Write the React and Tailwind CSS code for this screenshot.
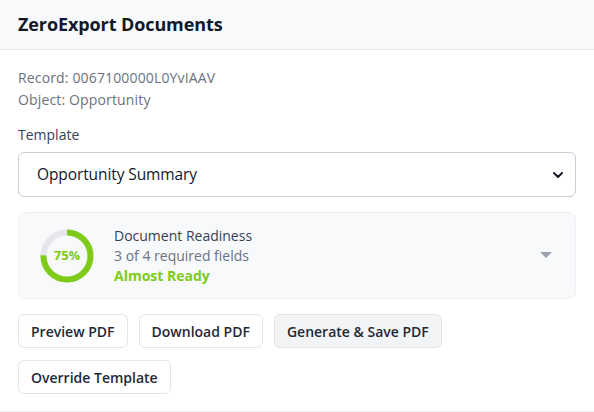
import { ChevronDown } from 'lucide-react'

/* ── readiness ring ── */
function Ring({ pct }) {
  const r = 23.5
  const c = 2 * Math.PI * r
  return (
    <div className="relative w-[54px] h-[54px] shrink-0">
      <svg width="54" height="54" viewBox="0 0 54 54">
        <circle cx="27" cy="27" r={r} fill="none" stroke="#e5e7eb" strokeWidth="6" />
        <circle cx="27" cy="27" r={r} fill="none" stroke="#7ecb1a" strokeWidth="6"
          strokeDasharray={`${c * pct / 100} ${c}`} transform="rotate(-90 27 27)" />
      </svg>
      <div className="absolute inset-0 flex items-center justify-center text-[13px] font-bold text-[#7ecb1a]">
        {pct}%
      </div>
    </div>
  )
}

function Btn({ children, active }) {
  return (
    <button className={`h-[34px] px-[12px] rounded-md border border-[#e3e5e8] text-[14px] font-semibold text-[#1f2937] ${active ? 'bg-[#f3f4f6]' : 'bg-white'}`}>
      {children}
    </button>
  )
}

export default function App() {
  return (
    <div className="w-[594px] h-[412px] bg-white font-['Open_Sans','Noto_Sans',sans-serif] border-b border-[#eceef1] overflow-hidden">
      <div className="h-[50px] bg-[#f8f9fb] border-b border-[#e2e5e9] px-[18px] flex items-center">
        <h1 className="text-[18px] font-bold text-[#111827] tracking-[-0.1px]">ZeroExport Documents</h1>
      </div>

      <div className="px-[18px] pt-[17px]">
        <div className="text-[14px] leading-[22px] text-[#6b7280] tracking-[0.15px]">
          <div>Record: 0067100000L0YvIAAV</div>
          <div>Object: Opportunity</div>
        </div>

        <div className="mt-[13px] text-[14px] font-medium text-[#374151]">Template</div>
        <div className="mt-[7px] h-[45px] rounded-md border border-[#c9d0da] flex items-center justify-between pl-[18px] pr-[9px]">
          <span className="text-[15.5px] text-[#111827] tracking-[-0.1px]">Opportunity Summary</span>
          <ChevronDown size={16} strokeWidth={3} className="text-[#111827]" />
        </div>

        <div className="mt-[15px] h-[87px] rounded-lg bg-[#f8f9fb] border border-[#eef0f3] flex items-center pl-[21px] pr-[23px]">
          <Ring pct={75} />
          <div className="ml-[20px] flex-1 text-[14px] leading-[20px]">
            <div className="font-medium text-[#374151]">Document Readiness</div>
            <div className="text-[#6b7280]">3 of 4 required fields</div>
            <div className="font-bold text-[#7ecb1a]">Almost Ready</div>
          </div>
          <svg width="12" height="7" viewBox="0 0 12 7"><path d="M0 0h12L6 6z" fill="#9ca3af" /></svg>
        </div>

        <div className="mt-[15px] flex flex-wrap gap-x-[11px] gap-y-[12px]">
          <Btn>Preview PDF</Btn>
          <Btn>Download PDF</Btn>
          <Btn active>Generate &amp; Save PDF</Btn>
          <Btn>Override Template</Btn>
        </div>
      </div>
    </div>
  )
}
